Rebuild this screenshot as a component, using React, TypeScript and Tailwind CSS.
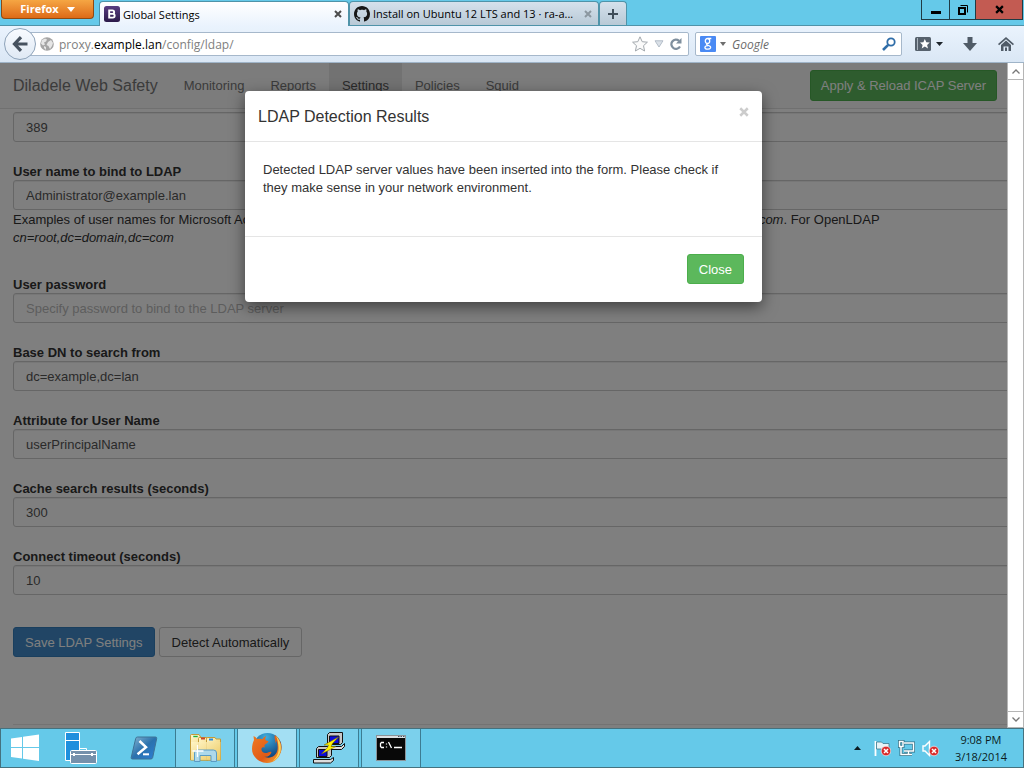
import React from "react";

const segoe = "font-['Open_Sans','Noto_Sans',sans-serif]";
const arial = "font-['Liberation_Sans',Arial,sans-serif]";

function CloseGlyph({ className }: { className: string }) {
  return (
    <svg viewBox="0 0 8 8" className={className} fill="none" stroke="currentColor" strokeWidth="2">
      <path d="M1 1l6 6M7 1L1 7" />
    </svg>
  );
}

function TabStrip() {
  return (
    <header className="flex h-[26px] shrink-0 items-end border-b border-[#4f93a9] bg-[#65c9e9] pl-px">
      <button className="flex h-[19px] w-[93px] shrink-0 items-center justify-center gap-2 self-start rounded-b-sm border border-t-0 border-[#8f4a12] bg-linear-to-b from-[#f5a643] to-[#dd6a15] text-[11px] leading-4 font-bold text-white">
        Firefox
        <svg viewBox="0 0 8 5" className="h-[5px] w-2" fill="white"><path d="M0 0h8L4 5z" /></svg>
      </button>
      <div className="relative top-px ml-[5px] flex h-[25px] w-[250px] items-center rounded-t-sm border border-b-0 border-[#4f93a9] bg-linear-to-b from-white to-[#eaf3fd] pl-1 pr-[6px]">
        <svg viewBox="0 0 16 16" className="h-4 w-4 shrink-0">
          <defs><linearGradient id="bs" x2="0" y2="1"><stop stopColor="#593d82" /><stop offset="1" stopColor="#2b1a49" /></linearGradient></defs>
          <rect width="16" height="16" rx="2.5" fill="url(#bs)" />
          <path d="M5.2 3.6v8.8M5.2 4.4h3.2a1.7 1.7 0 0 1 0 3.5H5.2h3.6a1.85 1.85 0 0 1 0 3.7H5.2" fill="none" stroke="#fff" strokeWidth="1.9" />
        </svg>
        <span className="ml-[3px] flex-1 whitespace-nowrap pt-0.5 text-[11px]">Global Settings</span>
        <button aria-label="Close tab"><CloseGlyph className="h-2 w-2 text-[#4c4c4c]" /></button>
      </div>
      <div className="flex h-6 w-[250px] items-center rounded-t-sm border border-b-0 border-[#4f93a9] bg-linear-to-b from-[#d5e1ec] to-[#b8c9d6] pl-1 pr-[6px]">
        <svg viewBox="0 0 16 16" className="h-4 w-4 shrink-0" fill="#161616">
          <path d="M8 0C3.58 0 0 3.58 0 8c0 3.54 2.29 6.53 5.47 7.59.4.07.55-.17.55-.38 0-.19-.01-.82-.01-1.49-2.01.37-2.53-.49-2.69-.94-.09-.23-.48-.94-.82-1.13-.28-.15-.68-.52-.01-.53.63-.01 1.08.58 1.23.82.72 1.21 1.87.87 2.33.66.07-.52.28-.87.51-1.07-1.78-.2-3.64-.89-3.64-3.95 0-.87.31-1.59.82-2.15-.08-.2-.36-1.02.08-2.12 0 0 .67-.21 2.2.82.64-.18 1.32-.27 2-.27s1.36.09 2 .27c1.53-1.04 2.2-.82 2.2-.82.44 1.1.16 1.92.08 2.12.51.56.82 1.27.82 2.15 0 3.07-1.87 3.75-3.65 3.95.29.25.54.73.54 1.48 0 1.07-.01 1.93-.01 2.2 0 .21.15.46.55.38A8.01 8.01 0 0 0 16 8c0-4.42-3.58-8-8-8z" />
        </svg>
        <span className="ml-[3px] flex-1 whitespace-nowrap pt-0.5 text-[11px]">Install on Ubuntu 12 LTS and 13 · ra-a...</span>
        <button aria-label="Close tab"><CloseGlyph className="h-2 w-2 text-[#8b97a0]" /></button>
      </div>
      <button aria-label="New tab" className="flex h-6 w-7 items-center justify-center rounded-t-sm border border-b-0 border-[#4f93a9] bg-linear-to-b from-[#d5e1ec] to-[#b8c9d6]">
        <svg viewBox="0 0 10 10" className="h-[10px] w-[10px]" fill="#3f4d59"><path d="M4 0h2v4h4v2H6v4H4V6H0V4h4z" /></svg>
      </button>
      <div className="ml-auto mr-px flex h-5 self-start border border-t-0 border-[#1f3b45]">
        <button aria-label="Minimize" className="flex w-7 items-center justify-center border-r border-[#1f3b45]">
          <svg viewBox="0 0 10 12" className="h-3 w-[10px]"><path d="M0 7h10v3H0z" /></svg>
        </button>
        <button aria-label="Restore" className="flex w-[26px] items-center justify-center border-r border-[#1f3b45]">
          <svg viewBox="0 0 10 10" className="h-[10px] w-[10px]" fill="none" stroke="#000"><path d="M1 3h6v6H1z" strokeWidth="2" /><path d="M2.5.5h7v7" /></svg>
        </button>
        <button aria-label="Close window" className="flex w-[46px] items-center justify-center bg-[#c35b52]">
          <CloseGlyph className="h-[9px] w-[9px] text-black" />
        </button>
      </div>
    </header>
  );
}

function Toolbar() {
  return (
    <div className="flex h-[37px] shrink-0 items-center border-b border-[#9fb4c8] bg-linear-to-b from-[#eaf3fd] to-[#dae7f5] pl-1 pr-[10px]">
      <button aria-label="Back" className="z-10 flex h-8 w-8 shrink-0 items-center justify-center rounded-full border border-[#8ea3b9] bg-linear-to-b from-[#f8fbff] to-[#dfe9f4]">
        <svg viewBox="0 0 16 16" className="h-4 w-4" fill="none" stroke="#46525f" strokeWidth="3.2"><path d="M9 1.200L2.500 8 9 14.800M3 8h12.500" /></svg>
      </button>
      <div className="-ml-2 flex h-6 min-w-0 flex-1 items-center rounded-r-xs border border-[#a6b8cb] bg-white pl-[11px] pr-[6px]">
        <svg viewBox="0 0 14 14" className="h-[14px] w-[14px] shrink-0">
          <circle cx="7" cy="7" r="6.8" fill="#a5a5a5" />
          <path d="M2 3l3-1.500 2 1-1 2-2 1 1 2-2 1-2-2zM8 5l3-2 2 3-1 3-2 3-1.500-3-2-1zM4 9l2 1 0 3-2-2z" fill="#e6e6e6" />
        </svg>
        <div className="ml-[5px] flex-1 whitespace-nowrap pt-px text-xs text-[#808080]">
          proxy.<span className="text-black">example.lan</span>/config/ldap/
        </div>
        <div className="flex items-center gap-[6px]">
          <svg viewBox="0 0 16 16" className="h-4 w-4" fill="#fafafa" stroke="#a3a9ae"><path d="M8 .8l2.200 4.900 5.200.5-3.900 3.500 1.100 5.300L8 12.300 3.400 15l1.100-5.300L.6 6.200l5.200-.5z" /></svg>
          <svg viewBox="0 0 10 8" className="h-2 w-[10px]" fill="#dbe1e8" stroke="#b3bdc8"><path d="M1 .8h8L5 7z" /></svg>
          <svg viewBox="0 0 12 12" className="h-3 w-3" fill="none" stroke="#7f8f9e" strokeWidth="2.200"><path d="M10 8.500A4.600 4.600 0 1 1 9 2.800" /><path d="M11.500 0v5.500H6z" fill="#7f8f9e" stroke="none" /></svg>
        </div>
      </div>
      <label className="ml-[6px] flex h-6 w-[207px] items-center rounded-xs border border-[#a6b8cb] bg-white pl-1 pr-[5px]">
        <svg viewBox="0 0 16 16" className="h-4 w-4 shrink-0">
          <rect width="16" height="16" rx="1" fill="#4a8af4" />
          <g fill="none" stroke="#fff" strokeWidth="1.300"><ellipse cx="7.500" cy="5" rx="2.200" ry="2.500" /><path d="M8 2.500h3.300M7 7.500c-1 1 0 1.500 1.500 2s2.500 1.200 2 2.500c-.8 1.700-5.500 1.500-5.600-.3 0-1.600 1.700-2 3.300-2" /></g>
        </svg>
        <svg viewBox="0 0 6 4" className="ml-1 h-1 w-[6px]" fill="#6d6d6d"><path d="M0 0h6L3 4z" /></svg>
        <input aria-label="Search" placeholder="Google" className="ml-[6px] min-w-0 flex-1 pt-px text-xs italic outline-none placeholder:text-[#6b6b6b]" />
        <svg viewBox="0 0 14 14" className="h-[14px] w-[14px]" fill="none" stroke="#2f6da8"><circle cx="9" cy="5" r="3.700" strokeWidth="1.800" /><path d="M6.200 7.800L1 13" strokeWidth="2.600" /></svg>
      </label>
      <button aria-label="Bookmarks" className="ml-[13px] flex items-center gap-[5px]">
        <svg viewBox="0 0 16 14" className="h-[14px] w-4"><rect width="16" height="14" rx="1.500" fill="#56616d" /><path d="M2.500 1v12" stroke="#a9b3bd" /><path d="M9.800 2l1.500 3.300 3.500.3-2.700 2.300.9 3.500-3.200-1.900-3.100 1.900.9-3.500L5 5.600l3.400-.3z" fill="#fff" /></svg>
        <svg viewBox="0 0 7 4" className="h-1 w-[7px]" fill="#1d242b"><path d="M0 0h7L3.500 4z" /></svg>
      </button>
      <button aria-label="Downloads" className="ml-5">
        <svg viewBox="0 0 14 14" className="h-[14px] w-[14px]" fill="#505b67"><path d="M4.500 0h5v6H14l-7 8-7-8h4.500z" /></svg>
      </button>
      <button aria-label="Home" className="ml-[21px]">
        <svg viewBox="0 0 16 14" className="h-[14px] w-4" fill="#505b67"><path d="M8 0l8 7-1.100 1.200L8 2.200 1.100 8.200 0 7zM8 3.600l5 4.400v6h-2.500V9.500h-5V14H3V8zM7 10.500h2V14H7z" /></svg>
      </button>
    </div>
  );
}

const links = ["Monitoring", "Reports", "Settings", "Policies", "Squid"];

function Navbar() {
  return (
    <nav className="flex h-[46px] shrink-0 items-center border-b border-[#e0e0e0] bg-[#f8f8f8] pr-[10px]">
      <a href="#" className="px-[13px] text-[16px] text-[#777]">Diladele Web Safety</a>
      {links.map((name) => (
        <a
          key={name}
          href="#"
          className={
            name === "Settings"
              ? "flex h-full items-center bg-[#e4e4e4] px-[13px] text-[#555]"
              : "flex h-full items-center px-[13px] text-[#777]"
          }
        >
          {name}
        </a>
      ))}
      <button className="ml-auto h-[31px] rounded-[3px] border border-[#4cae4c] bg-[#5cb85c] px-[10px] text-white">
        Apply &amp; Reload ICAP Server
      </button>
    </nav>
  );
}

type FieldProps = { id: string; label?: string; value?: string; placeholder?: string; type?: string; children?: React.ReactNode };

function Field({ id, label, value, placeholder, type = "text", children }: FieldProps) {
  return (
    <div className="mb-5">
      {label && <label htmlFor={id} className="block h-[18px] font-bold leading-5">{label}</label>}
      <div className="-mr-5">
        <input
          id={id}
          type={type}
          aria-label={label ? undefined : "Server port"}
          defaultValue={value}
          placeholder={placeholder}
          className="block h-[30px] w-full rounded-[3px] border border-[#ccc] bg-white px-3 text-[#555] shadow-[inset_0_1px_1px_rgba(0,0,0,0.075)] placeholder:text-[#bbb]"
        />
      </div>
      {children}
    </div>
  );
}

function SettingsForm() {
  return (
    <form className="flex-1 overflow-hidden pl-[13px] pt-[3px]" onSubmit={(e) => e.preventDefault()}>
      <Field id="port" value="389" />
      <Field id="user" label="User name to bind to LDAP" value="Administrator@example.lan">
        <p className="pb-2 pt-px">
          Examples of user names for Microsoft Active Directory are: <em>domain\user</em>, <em>user@domain.com</em> or{" "}
          <em>cn=user,cn=Users,dc=domain,dc=com</em>. For OpenLDAP <em>cn=root,dc=domain,dc=com</em>
        </p>
      </Field>
      <Field id="password" type="password" label="User password" placeholder="Specify password to bind to the LDAP server" />
      <Field id="base" label="Base DN to search from" value="dc=example,dc=lan" />
      <Field id="attribute" label="Attribute for User Name" value="userPrincipalName" />
      <Field id="cache" label="Cache search results (seconds)" value="300" />
      <Field id="timeout" label="Connect timeout (seconds)" value="10" />
      <div className="flex gap-1 pt-3">
        <button className="h-[30px] rounded-[3px] border border-[#357ebd] bg-[#428bca] px-[11px] pt-px text-white">Save LDAP Settings</button>
        <button type="button" className="h-[30px] rounded-[3px] border border-[#ccc] bg-white px-3 pt-px">Detect Automatically</button>
      </div>
      <hr className="mt-[67px] border-[#e6e6e6]" />
    </form>
  );
}

function ResultsDialog() {
  return (
    <div className="absolute inset-0 flex items-start justify-center bg-black/50 pt-7">
      <section role="dialog" aria-labelledby="dialog-title" className="w-[517px] rounded bg-white shadow-[0_5px_15px_rgba(0,0,0,0.5)]">
        <div className="flex h-[51px] items-center justify-between border-b border-[#e5e5e5] px-[13px]">
          <h4 id="dialog-title" className="pt-0.5 text-[16px]">LDAP Detection Results</h4>
          <button aria-label="Dismiss" className="mb-2 text-[#ccc]"><CloseGlyph className="h-[10px] w-[10px]" /></button>
        </div>
        <p className="px-[18px] pb-[39px] pt-[19px]">
          Detected LDAP server values have been inserted into the form. Please check if they make sense in your network environment.
        </p>
        <div className="flex justify-end border-t border-[#e5e5e5] px-[18px] pb-[18px] pt-[17px]">
          <button className="h-[30px] rounded-[3px] border border-[#4cae4c] bg-[#5cb85c] px-[11px] pt-px text-white">Close</button>
        </div>
      </section>
    </div>
  );
}

function Scrollbar() {
  return (
    <div className="flex w-[17px] shrink-0 flex-col justify-between border-x border-[#b5b5b5] bg-white">
      <div className="flex h-[17px] items-center justify-center border-b border-[#b5b5b5]">
        <svg viewBox="0 0 8 5" className="h-[5px] w-2" fill="none" stroke="#777" strokeWidth="1.300"><path d="M.5 4.500L4 1l3.500 3.500" /></svg>
      </div>
      <div className="flex h-[17px] items-center justify-center border-y border-[#b5b5b5]">
        <svg viewBox="0 0 8 5" className="h-[5px] w-2" fill="none" stroke="#777" strokeWidth="1.300"><path d="M.5.5L4 4 7.500.5" /></svg>
      </div>
    </div>
  );
}

function ServerManagerIcon() {
  return (
    <svg viewBox="0 0 32 32" className="h-8 w-8" stroke="#fff">
      <path d="M.5.500h14v28H.5z" fill="#1f8fdd" />
      <path d="M1 8.500h13" />
      <path d="M14.500 19v-2.500h7V19" fill="none" />
      <rect x="5.500" y="18.500" width="26" height="13" rx="1" fill="#7590ab" />
      <path d="M6 22.500h25" />
      <path d="M9 21v3M27 21v3" strokeWidth="2" />
    </svg>
  );
}

function PowerShellIcon() {
  return (
    <svg viewBox="0 0 28 24" className="h-6 w-7">
      <defs><linearGradient id="ps" x2="1" y2="1"><stop stopColor="#8ab8d3" /><stop offset=".5" stopColor="#2a71ad" /><stop offset="1" stopColor="#2d7fd6" /></linearGradient></defs>
      <path d="M7.500 1h18q1.500 0 1.200 1.500l-4 19q-.3 1.500-2 1.500H2.500q-1.700 0-1.300-1.500l4.500-19Q6 1 7.500 1z" fill="url(#ps)" stroke="#3d7296" />
      <path d="M9.500 5l6.500 6.200-8.500 7" fill="none" stroke="#fff" strokeWidth="2.500" />
      <path d="M13 18.300h6" stroke="#fff" strokeWidth="2" />
    </svg>
  );
}

function FolderIcon() {
  return (
    <svg viewBox="0 0 32 30" className="h-[30px] w-8">
      <defs><linearGradient id="fo" x2="1" y2="1"><stop stopColor="#fff6c9" /><stop offset="1" stopColor="#ebc85f" /></linearGradient></defs>
      <path d="M1.500 27V2.500q0-1 1-1h7.500l2 3h7v22.500z" fill="url(#fo)" stroke="#c39b39" />
      <path d="M4 2.500h5v2H4z" fill="#25b12d" stroke="#fff" strokeWidth=".5" />
      <path d="M9.500 27V5.500q0-1 1-1H17l2 2h5V27z" fill="url(#fo)" stroke="#c39b39" />
      <path d="M12 4.500h4v2h-4z" fill="#c9452f" />
      <path d="M17.500 27V6.500q0-2 1-2H26l1 1.500h4.500v21z" fill="url(#fo)" stroke="#c39b39" />
      <path d="M20 5.500h4v2h-4z" fill="#2a8bdc" />
      <path d="M2 9h29.500v18H2z" fill="url(#fo)" opacity=".85" />
      <path d="M5.500 28.500V20q0-3 3-3h16q3 0 3 3v8.500h-5.500v-6H11v6z" fill="#a9d8ef" fillOpacity=".95" stroke="#5a9cc4" />
      <path d="M8.500 12v12M3.500 18h11" stroke="#fff" strokeWidth="1.300" />
    </svg>
  );
}

function FirefoxIcon() {
  return (
    <svg viewBox="0 0 32 32" className="h-8 w-8">
      <defs>
        <radialGradient id="globe" cx=".45" cy=".15" r=".8"><stop stopColor="#3eafe0" /><stop offset="1" stopColor="#0c3a75" /></radialGradient>
        <linearGradient id="fox" x2="1" y2="1"><stop stopColor="#ef7b22" /><stop offset=".6" stopColor="#e15a17" /><stop offset="1" stopColor="#f6b43a" /></linearGradient>
      </defs>
      <circle cx="16.500" cy="15" r="14" fill="url(#globe)" />
      <path d="M24 3c5 4 7 9 6.500 14-.8 8-7 14-14.500 14S1 25 1 17c0-4 1-7 2-9l-.5-4C4 4.500 5 5.500 6 7c2-.5 4-.5 5.500.2 1-1.700 2-2.700 3.700-3.200-.8 1.500-1.200 3-.8 4 1 .8 2 1 3 1-.5 2-2 2.500-3.500 3.500-.8 1-.5 2 .1 3-1.500-.5-3-.3-3.500 1-.5 3 2 5 5 4.500 2-.3 3-2 5-1-1 4-4.500 5.500-8 4.500 6 3 13 0 14-7 .5-4-.5-8-2-10 .5 2 .4 3 0 4-.5-4-1.500-6.500-.5-8.500z" fill="url(#fox)" />
      <path d="M25 4c4 4 5.500 9 4.700 14C29 23 26 27 22 29c4-4 6-8 5.500-14-.3-4-1-8-2.500-11z" fill="#f9d456" />
    </svg>
  );
}

function PuttyIcon() {
  return (
    <svg viewBox="0 0 32 32" className="h-8 w-8">
      <g stroke="#111">
        <path d="M14.500 2.500l2-2h13v10l-2 2h-13z" fill="#c8c8c8" />
        <path d="M16.500 4h9.500v7.500h-9.500z" fill="#0b0bdc" />
        <path d="M12.500 14.500h16l3-3v3l-3 3h-16z" fill="#ddd" />
      </g>
      <g stroke="#111">
        <path d="M3.500 16.500l2-2h13v9l-2 2h-13z" fill="#c8c8c8" />
        <path d="M5.500 17.500H14v7H5.500z" fill="#0b0bdc" />
        <path d="M.5 27.500h17l3-2v3l-3 2.500H.5z" fill="#ddd" />
      </g>
      <path d="M25.500 5L11 13h4.500l-1 2.500L8.500 22 23 14.500h-5l1.500-3z" fill="#fff200" stroke="#765f00" strokeWidth=".5" />
    </svg>
  );
}

function TerminalIcon() {
  return (
    <svg viewBox="0 0 30 26" className="h-[26px] w-[30px]">
      <rect x=".5" y=".5" width="29" height="25" fill="#080808" stroke="#8b9398" />
      <path d="M1 1h28v2H1z" fill="#dce1e4" />
      <path d="M22 1.500h1.500M24.500 1.500H26M27 1.500h1.500" stroke="#456" />
      <path d="M8 7.500H5.500l-1 1v3l1 1H8M10.500 8.500v1M10.500 11.500v1M12.500 7l3 6M18 12.500h8" fill="none" stroke="#fff" strokeWidth="1.300" />
    </svg>
  );
}

function RedBadge() {
  return (
    <g>
      <circle cx="12" cy="11" r="4.800" fill="#d92b2b" stroke="#fff" strokeWidth=".6" />
      <path d="M10 9l4 4M14 9l-4 4" stroke="#fff" strokeWidth="1.500" />
    </g>
  );
}

function Taskbar() {
  return (
    <footer className="flex h-10 shrink-0 items-stretch border border-[#44727f] bg-[#65c9e9]">
      <button aria-label="Start" className="ml-[10px] flex w-7 items-center">
        <svg viewBox="0 0 28 28" className="h-7 w-7" fill="#fff"><path d="M0 4.500l11-1.600V13H0zM12 2.700L28 .5V13H12zM0 14h11v10.500L0 23zM12 14h16v13l-16-2.200z" /></svg>
      </button>
      <button aria-label="Server Manager" className="ml-[26px]"><ServerManagerIcon /></button>
      <button aria-label="PowerShell" className="ml-[33px] w-7"><PowerShellIcon /></button>
      <div className="ml-[17px] flex gap-0.5">
        <button aria-label="File Explorer" className="flex w-15 items-center justify-center border-x border-[#3c7c92] bg-[#7bd0ec]"><FolderIcon /></button>
        <button aria-label="Firefox" className="flex w-15 items-center justify-center border-x border-[#3c7c92] bg-[#a3dff3]"><FirefoxIcon /></button>
        <button aria-label="PuTTY" className="flex w-15 items-center justify-center border-x border-[#3c7c92] bg-[#7bd0ec]"><PuttyIcon /></button>
        <button aria-label="Command Prompt" className="flex w-15 items-center justify-center border-x border-[#3c7c92] bg-[#7bd0ec]"><TerminalIcon /></button>
      </div>
      <div className="ml-auto flex items-center">
        <svg viewBox="0 0 7 4" className="h-1 w-[7px]" fill="#0b1c22"><path d="M0 4h7L3.500 0z" /></svg>
        <svg viewBox="0 0 17 17" className="ml-[13px] h-[17px] w-[17px]" fill="none">
          <path d="M1.500 1v15" stroke="#fff" strokeWidth="1.800" /><path d="M2.500 2h5l1.500 1.500h6v7H9L7.500 9h-5z" fill="#e6f2f6" stroke="#3e788d" strokeWidth=".8" /><RedBadge />
        </svg>
        <svg viewBox="0 0 17 17" className="ml-[7px] h-[17px] w-[17px]" fill="none">
          <g stroke="#2e6f84" strokeWidth="3"><path d="M6 3h9.500v8H6M10.500 11v3M7 14.500h7M3 7v7.500h4" /><path d="M1.500 1.500h3.500v5H1.500z" /></g>
          <g stroke="#fff" strokeWidth="1.500"><path d="M6 3h9.500v8H6M10.500 11v3M7 14.500h7M3 7v7.500h4" /><path d="M1.500 1.500h3.500v5H1.500z" /></g>
        </svg>
        <svg viewBox="0 0 17 17" className="ml-[7px] h-[17px] w-[17px]" fill="none">
          <path d="M1 6h2l4.500-4.500v14L3 11H1z" fill="#65c9e9" stroke="#fff" strokeWidth="1.400" /><RedBadge />
        </svg>
        <div className="ml-4 mr-4 text-center text-[11px] leading-[17px] text-[#0b1c22]">
          <div>9:08 PM</div>
          <div>3/18/2014</div>
        </div>
      </div>
    </footer>
  );
}

export default function App() {
  return (
    <div className={`flex h-screen flex-col overflow-hidden text-black ${segoe}`}>
      <TabStrip />
      <Toolbar />
      <div className="flex min-h-0 flex-1">
        <main className={`relative flex min-w-0 flex-1 flex-col overflow-hidden bg-white text-[13px] leading-[18px] text-[#333] ${arial}`}>
          <Navbar />
          <SettingsForm />
          <ResultsDialog />
        </main>
        <Scrollbar />
      </div>
      <Taskbar />
    </div>
  );
}
